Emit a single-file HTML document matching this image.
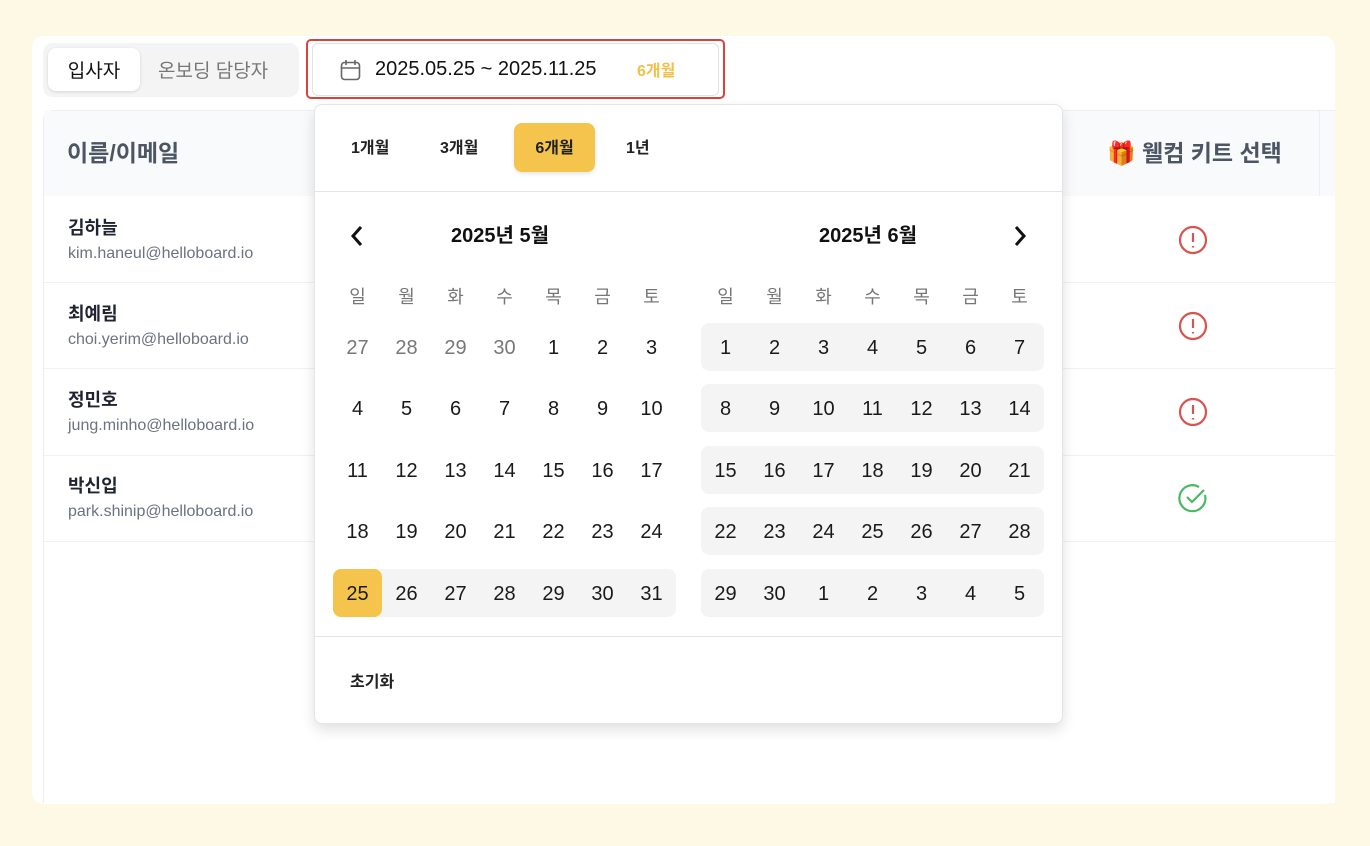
<!DOCTYPE html>
<html><head><meta charset="utf-8"><style>
*{box-sizing:border-box;margin:0;padding:0}
body{width:1370px;height:846px;background:#fdf9e4;font-family:"Liberation Sans","Noto Sans CJK KR",sans-serif;position:relative;overflow:hidden;color:#111}
.abs{position:absolute}
.card{left:32px;top:36px;width:1303px;height:768px;background:#fff;border-radius:12px}
.table{left:43px;top:110px;width:1292px;height:693px;border-left:1px solid #eceef1;border-top:1px solid #eceef1;border-top-left-radius:10px;background:#fff}
.thead{left:44px;top:111px;width:1291px;height:85px;background:#f9fafb}
.row{left:44px;width:1291px;height:1px;background:#f0f1f3}
.name{left:68px;font-size:18px;font-weight:bold;color:#1f2430}
.email{left:68px;font-size:16px;color:#6b7280}
.cell{position:absolute;width:49px;height:48px;line-height:48px;text-align:center;font-size:20px;color:#1a1a1a}
.g{color:#777}
.bar{position:absolute;height:48px;background:#f4f4f5;border-radius:8px}
</style></head><body>
<div class="abs card"></div>
<div class="abs" style="left:43px;top:43px;width:256px;height:54px;background:#f4f4f5;border-radius:10px"></div>
<div class="abs" style="left:48px;top:48px;width:92px;height:43px;background:#fff;border-radius:8px;box-shadow:0 1px 3px rgba(0,0,0,.12)"></div>
<div class="abs" style="left:48px;top:56px;width:92px;text-align:center;font-size:19px;color:#111">입사자</div>
<div class="abs" style="left:158px;top:56px;font-size:19px;color:#777">온보딩 담당자</div>

<div class="abs" style="left:306px;top:39px;width:419px;height:60px;border:2px solid #d9433d;border-radius:5px"></div>
<div class="abs" style="left:312px;top:43px;width:407px;height:53px;border:1px solid #e2e2e2;border-radius:6px;background:#fff"></div>
<svg class="abs" style="left:340px;top:59px" width="21" height="22" viewBox="0 0 21 22" fill="none" stroke="#666" stroke-width="1.6"><rect x="1.5" y="3.5" width="18" height="17" rx="3"/><path d="M1.5 9h18M6 1v5M15 1v5"/></svg>
<div class="abs" style="left:375px;top:58px;font-size:20px;color:#111">2025.05.25 ~ 2025.11.25</div>
<div class="abs" style="left:637px;top:57px;font-size:16px;color:#f2c14a;font-weight:bold">6개월</div>

<div class="abs table"></div>
<div class="abs thead"></div>
<div class="abs" style="left:1319px;top:111px;width:1px;height:85px;background:#eceef1"></div>
<div class="abs" style="left:67px;top:134px;font-size:23px;font-weight:bold;color:#4b5563">이름/이메일</div>
<div class="abs" style="left:1107px;top:134px;font-size:23px;font-weight:bold;color:#4b5563">🎁 웰컴 키트 선택</div>
<div class="abs row" style="top:282px"></div><div class="abs row" style="top:368px"></div><div class="abs row" style="top:455px"></div><div class="abs row" style="top:541px"></div>
<div class="abs name" style="top:214px">김하늘</div><div class="abs email" style="top:245px">kim.haneul@helloboard.io</div>
<div class="abs name" style="top:300px">최예림</div><div class="abs email" style="top:331px">choi.yerim@helloboard.io</div>
<div class="abs name" style="top:386px">정민호</div><div class="abs email" style="top:417px">jung.minho@helloboard.io</div>
<div class="abs name" style="top:472px">박신입</div><div class="abs email" style="top:503px">park.shinip@helloboard.io</div>
<svg class="abs" style="left:1178px;top:225px" width="30" height="30" viewBox="0 0 30 30" fill="none" stroke="#d9534f" stroke-width="2.2"><circle cx="15" cy="15" r="13"/><path d="M15 8v9M15 21v1.5"/></svg>
<svg class="abs" style="left:1178px;top:311px" width="30" height="30" viewBox="0 0 30 30" fill="none" stroke="#d9534f" stroke-width="2.2"><circle cx="15" cy="15" r="13"/><path d="M15 8v9M15 21v1.5"/></svg>
<svg class="abs" style="left:1178px;top:397px" width="30" height="30" viewBox="0 0 30 30" fill="none" stroke="#d9534f" stroke-width="2.2"><circle cx="15" cy="15" r="13"/><path d="M15 8v9M15 21v1.5"/></svg>
<svg class="abs" style="left:1178px;top:483px" width="30" height="30" viewBox="0 0 30 30" fill="none" stroke="#4cb863" stroke-width="2.2"><path d="M27 12A13 13 0 1 1 21 4"/><path d="M9 14l5 5 12-12"/></svg>

<div class="abs" style="left:314px;top:104px;width:749px;height:620px;background:#fff;border:1px solid #e4e4e7;border-radius:8px;box-shadow:0 6px 14px rgba(0,0,0,.12)"></div>
<div class="abs" style="left:314px;top:191px;width:749px;height:1px;background:#e4e4e7"></div>
<div class="abs" style="left:314px;top:636px;width:749px;height:1px;background:#e4e4e7"></div>
<div class="abs" style="left:351px;top:134px;font-size:16px;font-weight:bold;color:#222">1개월</div>
<div class="abs" style="left:440px;top:134px;font-size:16px;font-weight:bold;color:#222">3개월</div>
<div class="abs" style="left:514px;top:123px;width:81px;height:49px;background:#f5c44c;border-radius:8px;box-shadow:0 2px 4px rgba(0,0,0,.1)"></div>
<div class="abs" style="left:514px;top:134px;width:81px;text-align:center;font-size:16px;font-weight:bold;color:#222">6개월</div>
<div class="abs" style="left:626px;top:134px;font-size:16px;font-weight:bold;color:#222">1년</div>
<div class="abs" style="left:350px;top:668px;font-size:16px;font-weight:bold;color:#222">초기화</div>

<svg class="abs" style="left:348px;top:224px" width="18" height="24" viewBox="0 0 18 24" fill="none" stroke="#111" stroke-width="3"><path d="M13 3L5 12l8 9"/></svg>
<svg class="abs" style="left:1011px;top:224px" width="18" height="24" viewBox="0 0 18 24" fill="none" stroke="#111" stroke-width="3"><path d="M5 3l8 9-8 9"/></svg>
<div class="abs" style="left:451px;top:219px;font-size:20px;font-weight:bold">2025년 5월</div>
<div class="abs" style="left:819px;top:219px;font-size:20px;font-weight:bold">2025년 6월</div>

<div id="cal"></div>
<script>
var h='';
var wd=['일','월','화','수','목','금','토'];
var rows=[323,384,446,507,569];
var L=[[27,28,29,30,1,2,3],[4,5,6,7,8,9,10],[11,12,13,14,15,16,17],[18,19,20,21,22,23,24],[25,26,27,28,29,30,31]];
var R=[[1,2,3,4,5,6,7],[8,9,10,11,12,13,14],[15,16,17,18,19,20,21],[22,23,24,25,26,27,28],[29,30,1,2,3,4,5]];
[333,701].forEach(function(x0,m){
 for(var i=0;i<7;i++)h+='<div class="cell" style="left:'+(x0+i*49)+'px;top:273px;font-size:18px;color:#777">'+wd[i]+'</div>';
 for(var r=0;r<5;r++){
  if(m==1)h+='<div class="bar" style="left:701px;top:'+rows[r]+'px;width:343px"></div>';
  if(m==0&&r==4){h+='<div class="bar" style="left:333px;top:569px;width:343px"></div><div class="bar" style="left:333px;top:569px;width:49px;background:#f5c44c"></div>';}
  for(var i=0;i<7;i++){var v=(m?R:L)[r][i];var g=(m==0&&r==0&&i<4)?' g':'';
   h+='<div class="cell'+g+'" style="left:'+(x0+i*49)+'px;top:'+(rows[r]+1)+'px">'+v+'</div>';}
 }
});
document.getElementById('cal').innerHTML=h;
</script>
</body></html>
